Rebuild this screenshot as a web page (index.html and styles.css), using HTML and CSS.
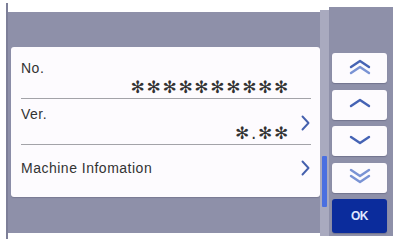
FILE: index.html
```html
<!DOCTYPE html>
<html lang="en">
<head>
    <meta charset="UTF-8">
    <meta name="viewport" content="width=device-width, initial-scale=1.0">
    <title>Machine Information</title>
    <link rel="stylesheet" href="styles.css">
</head>
<body>
    <div class="screen">
        <div class="edge"></div>

        <div class="panel">
            <div class="card">
                <div class="row row-first">
                    <div class="row-body">
                        <span class="label">No.</span>
                        <span class="value">✻✻✻✻✻✻✻✻✻✻</span>
                    </div>
                    <div class="row-arrow"></div>
                </div>
                <div class="row row-second">
                    <div class="row-body">
                        <span class="label">Ver.</span>
                        <span class="value">✻.✻✻</span>
                    </div>
                    <div class="row-arrow">
                        <svg width="9" height="16" viewBox="0 0 9 16"><polyline points="1.5,1.5 7.5,8 1.5,14.5" /></svg>
                    </div>
                </div>
                <div class="row row-last">
                    <div class="row-body">
                        <span class="label">Machine Infomation</span>
                    </div>
                    <div class="row-arrow">
                        <svg width="9" height="16" viewBox="0 0 9 16"><polyline points="1.5,1.5 7.5,8 1.5,14.5" /></svg>
                    </div>
                </div>
            </div>
        </div>

        <div class="scroll">
            <div class="thumb"></div>
        </div>

        <div class="side">
            <button class="key">
                <svg width="22" height="16" viewBox="0 0 22 16"><polyline class="dark" points="2,8 11,2 20,8" /><polyline class="light" points="2,14 11,8 20,14" /></svg>
            </button>
            <button class="key">
                <svg width="22" height="10" viewBox="0 0 22 10"><polyline class="dark" points="2,8 11,2 20,8" /></svg>
            </button>
            <button class="key">
                <svg width="22" height="10" viewBox="0 0 22 10"><polyline class="dark" points="2,2 11,8 20,2" /></svg>
            </button>
            <button class="key">
                <svg width="22" height="16" viewBox="0 0 22 16"><polyline class="light" points="2,2 11,8 20,2" /><polyline class="light" points="2,8 11,14 20,8" /></svg>
            </button>
            <button class="key key-ok">OK</button>
        </div>
    </div>
</body>
</html>
```

FILE: styles.css
```css
:root {
    --panel-color: #8e90a9;
    --track-color: #a9aabf;
    --thumb-color: #4a6fe0;
    --card-color: #fdfbfe;
    --line-color: #a3a3a8;
    --text-color: #333;
    --arrow-color: #4460ad;
    --ok-color: #0b2c9c;
}

body {
    margin: 0;
    background-color: white;
    font-family: "Liberation Sans", Arial, sans-serif;
    color: var(--text-color);
}

.screen {
    display: flex;
    width: 393px;
    height: 239px;
    overflow: hidden;
}

.edge {
    flex: 0 0 2px;
    margin: 3px 0 0 6px;
    background-color: #7d7f98;
}

.panel {
    flex: 0 0 312px;
    height: 221px;
    margin-top: 12px;
    padding: 35px 0 0 3px;
    box-sizing: border-box;
    background-color: var(--panel-color);
}

.card {
    height: 150px;
    background-color: var(--card-color);
    border-radius: 3px;
    box-shadow: 0 1px 1px rgba(60, 60, 80, 0.25);
}

.row {
    display: flex;
    margin: 0 9px 0 10px;
}
.row-first {
    height: 51px;
    border-bottom: 1px solid var(--line-color);
}
.row-second {
    height: 45px;
    border-bottom: 1px solid var(--line-color);
}
.row-last {
    height: 52px;
    align-items: center;
}

.row-body {
    flex: 1;
    display: flex;
    flex-direction: column;
}
.row-first .row-body {
    padding-top: 13px;
}
.row-second .row-body {
    padding-top: 7px;
}
.row-last .row-body {
    padding-bottom: 6px;
}

.label {
    font-size: 14px;
    line-height: 16px;
    letter-spacing: 0.5px;
}

.value {
    align-self: flex-end;
    font-family: "DejaVu Sans", sans-serif;
    font-size: 17px;
    line-height: 18px;
    letter-spacing: 1.7px;
    margin-right: -1px;
    color: #333;
    margin-top: 2px;
}

.row-arrow {
    flex: 0 0 21px;
    display: flex;
    justify-content: flex-end;
    align-items: center;
    padding-right: 1px;
}
.row-last .row-arrow {
    padding-bottom: 6px;
}
.row-second .row-arrow {
    padding-top: 2px;
}
.row-arrow polyline {
    fill: none;
    stroke: var(--arrow-color);
    stroke-width: 1.9;
    stroke-linecap: round;
    stroke-linejoin: round;
}

.scroll {
    flex: 0 0 9px;
    height: 226px;
    margin-top: 10px;
    background-color: var(--track-color);
    display: flex;
    flex-direction: column;
}
.thumb {
    height: 51px;
    margin: 146px 2px 0 2px;
    background-color: var(--thumb-color);
    border-radius: 1px;
}

.side {
    flex: 1;
    height: 229px;
    margin-top: 7px;
    padding: 46px 6px 0 3px;
    box-sizing: border-box;
    background-color: var(--panel-color);
    display: flex;
    flex-direction: column;
    gap: 6.5px;
}

.key {
    height: 30px;
    padding: 0;
    border: none;
    border-radius: 3px;
    background-color: var(--card-color);
    box-shadow: 0 1px 1px rgba(50, 50, 80, 0.3);
    display: flex;
    align-items: center;
    justify-content: center;
    padding-bottom: 3px;
}
.key polyline {
    fill: none;
    stroke-width: 2.4;
    stroke-linecap: round;
    stroke-linejoin: round;
}
.key .dark {
    stroke: #4563b4;
}
.key .light {
    stroke: #7a93d4;
}

.key-ok {
    height: 34px;
    padding-bottom: 0;
    background-color: var(--ok-color);
    color: #dfe6ff;
    font-family: "Liberation Sans", Arial, sans-serif;
    font-weight: bold;
    font-size: 12px;
    letter-spacing: -0.5px;
}
```
